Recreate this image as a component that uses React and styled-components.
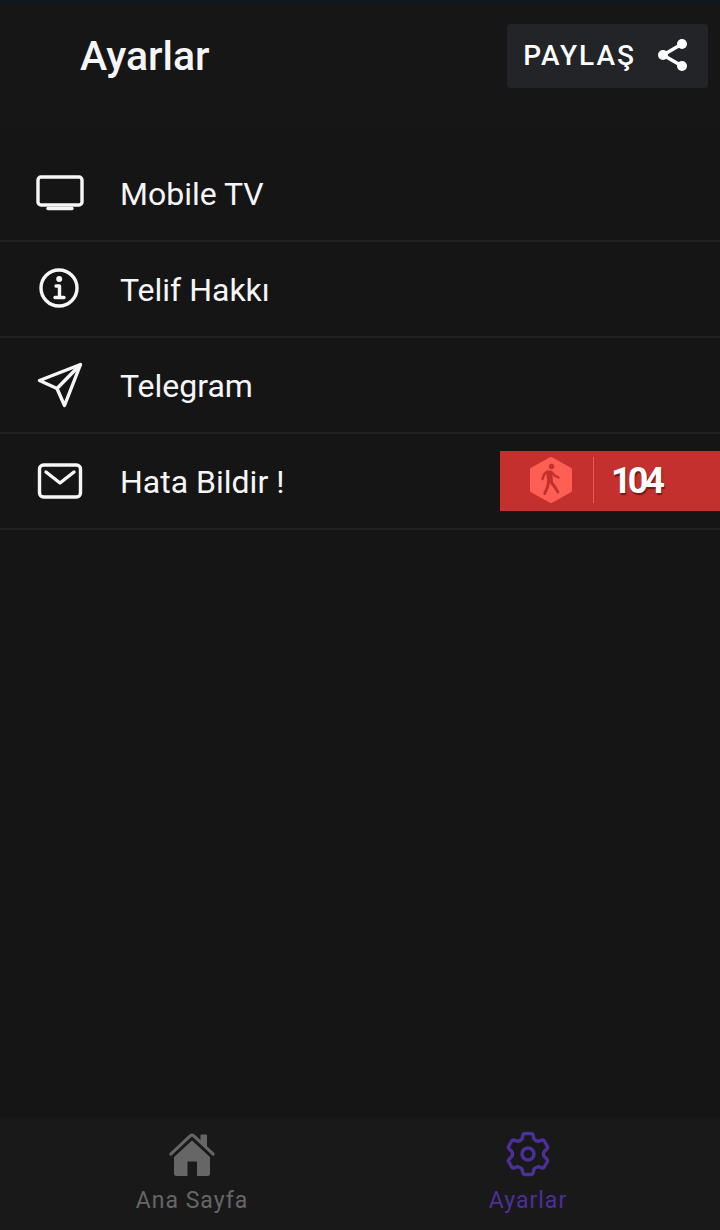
import styled, { createGlobalStyle } from "styled-components"

const GlobalStyle = createGlobalStyle`
    * {
        box-sizing: border-box;
    }

    body {
        margin: 0;
        background-color: #161616;
        font-family: Roboto, "Noto Sans", sans-serif;
    }
`

const Page = styled.div`
    display: flex;
    flex-direction: column;
    min-height: 100vh;
    color: #f6f6f8;
    background-color: #161616;
`

const Header = styled.header`
    display: flex;
    justify-content: space-between;
    align-items: center;
    padding: 20px 12px 42px 80px;
    border-top: 4px solid #10171d;
`

const Title = styled.h1`
    margin: 0;
    font-size: 41px;
    font-weight: 500;
    line-height: 62px;
`

const ShareButton = styled.button`
    display: flex;
    align-items: center;
    gap: 21px;
    height: 64px;
    padding: 0 19px 2px 16px;
    border: none;
    border-radius: 4px;
    color: #ffffff;
    background-color: #222427;
    font-family: inherit;
    font-size: 28px;
    font-weight: 500;
    letter-spacing: 2px;
    cursor: pointer;
`

const Main = styled.main`
    flex: 1;
    background-color: #151515;
`

const List = styled.ul`
    margin: 0;
    padding: 16px 0 0;
    list-style: none;
`

const ItemLink = styled.a`
    display: flex;
    align-items: center;
    gap: 36px;
    height: 96px;
    padding: 2px 36px 0;
    border-bottom: 2px solid #212121;
    color: inherit;
    font-size: 32px;
    line-height: 40px;
    text-decoration: none;
`

const LineIcon = styled.svg`
    flex: none;
    fill: none;
    stroke: currentColor;
    stroke-width: 3.4;
    stroke-linecap: round;
    stroke-linejoin: round;
`

const Toast = styled.aside`
    position: absolute;
    top: 451px;
    right: 0;
    display: flex;
    align-items: center;
    width: 220px;
    height: 60px;
    padding: 0 0 2px 30px;
    background-color: #c4302d;
`

const ToastValue = styled.div`
    height: 46px;
    margin-left: 21px;
    padding-left: 17px;
    border-left: 1px solid #f0584f;
    color: #ffffff;
    font-size: 36px;
    font-weight: 700;
    line-height: 48px;
    letter-spacing: -4px;
    text-shadow: 1px 2px 1px #701818;
`

const TabBar = styled.nav`
    display: flex;
    height: 113px;
    padding: 0 24px;
    background-color: #191919;
`

const Tab = styled.a`
    display: flex;
    flex: 1;
    flex-direction: column;
    align-items: center;
    gap: 8px;
    padding-top: 13px;
    color: ${({ $active }) => ($active ? "#4d2f99" : "#666666")};
    font-size: 23px;
    line-height: 30px;
    letter-spacing: 1px;
    text-decoration: none;
`

const TvIcon = () => (
    <LineIcon width="48" height="48" viewBox="0 0 48 48">
        <rect x="2" y="7" width="44" height="28" rx="3" />
        <path d="M12 38.500h24" />
    </LineIcon>
)

const InfoIcon = () => (
    <LineIcon width="48" height="48" viewBox="0 0 48 48">
        <circle cx="23" cy="22" r="18" />
        <path d="M20 20h3.500v11M19 31.500h9" />
        <circle cx="23.200" cy="13" r="2" fill="currentColor" strokeWidth="2" />
    </LineIcon>
)

const PlaneIcon = () => (
    <LineIcon width="48" height="48" viewBox="0 0 48 48">
        <path d="M44.500 2.500L3.500 18.500L21 26.500L28.500 43.500z" />
        <path d="M44 3L21 26.500" />
    </LineIcon>
)

const MailIcon = () => (
    <LineIcon width="48" height="48" viewBox="0 0 48 48">
        <rect x="3.500" y="7" width="41" height="32" rx="4" />
        <path d="M10 14l14 11 14-11" />
    </LineIcon>
)

const ShareIcon = () => (
    <LineIcon width="32" height="34" viewBox="0 0 32 34">
        <path d="M25 6L6 17L25 28" />
        <g fill="currentColor" stroke="none">
            <circle cx="25" cy="6" r="5" />
            <circle cx="6" cy="17" r="5" />
            <circle cx="25" cy="28" r="5" />
        </g>
    </LineIcon>
)

const HomeIcon = () => (
    <LineIcon width="48" height="48" viewBox="0 0 48 48">
        <path
            d="M24 10.500L42 27V43.500Q42 46 39.500 46H29V31.500H19.500V46H8.500Q6 46 6 43.500V27z"
            fill="currentColor"
            stroke="none"
        />
        <path d="M32.500 5.500Q32.500 4.500 33.500 4.500H38Q39 4.500 39 5.500V18.500L32.500 12.500z" fill="currentColor" stroke="none" />
        <path d="M2.800 24.200L22.500 5.700Q24 4.500 25.500 5.700L45.200 24.200" strokeWidth="3" />
    </LineIcon>
)

const GearIcon = () => (
    <LineIcon width="48" height="48" viewBox="-24 -24 48 48">
        <path d="M-6-15L-5-19Q-4.600-20.500-3-20.500H3Q4.600-20.500 5-19L6-15Q8-13 10-12.700L14-13.900Q15.500-14.300 16.300-13L19.300-7.700Q20-6.400 19-5.300L16-2.300Q15 0 16 2.300L19 5.300Q20 6.400 19.300 7.700L16.300 13Q15.500 14.300 14 13.900L10 12.700Q8 13 6 15L5 19Q4.600 20.500 3 20.500H-3Q-4.600 20.500-5 19L-6 15Q-8 13-10 12.700L-14 13.900Q-15.500 14.300-16.300 13L-19.300 7.700Q-20 6.400-19 5.300L-16 2.300Q-15 0-16-2.300L-19-5.300Q-20-6.400-19.300-7.700L-16.300-13Q-15.500-14.300-14-13.900L-10-12.700Q-8-13-6-15z" />
        <circle r="6" />
    </LineIcon>
)

const WalkerIcon = () => (
    <svg width="42" height="46" viewBox="0 0 42 46">
        <path
            d="M21 2L40 12.500V33.500L21 44L2 33.500V12.500z"
            fill="#ff5e54"
            stroke="#ff5e54"
            strokeWidth="4"
            strokeLinejoin="round"
        />
        <g fill="none" stroke="#c4302d" strokeLinecap="round" strokeLinejoin="round">
            <circle cx="21.500" cy="9.500" r="2.700" fill="#c4302d" stroke="none" />
            <path d="M17 14.500H21L22 24L18.500 25z" fill="#c4302d" strokeWidth="2" />
            <path d="M16.500 15L14 17.500L12.500 22M22 15.500L24.500 18.500L28.500 20.500" strokeWidth="2.400" />
            <path d="M18.500 24.500L17.500 30L14.800 36.500M20.500 24.500L24.500 29.500L27.800 35" strokeWidth="3" />
        </g>
    </svg>
)

const ITEMS = [
    { label: "Mobile TV", Icon: TvIcon },
    { label: "Telif Hakkı", Icon: InfoIcon },
    { label: "Telegram", Icon: PlaneIcon },
    { label: "Hata Bildir !", Icon: MailIcon },
]

const App = () => (
    <Page>
        <GlobalStyle />
        <Header>
            <Title>Ayarlar</Title>
            <ShareButton>
                PAYLAŞ
                <ShareIcon />
            </ShareButton>
        </Header>
        <Main>
            <List>
                {ITEMS.map(({ label, Icon }) => (
                    <li key={label}>
                        <ItemLink href="#">
                            <Icon />
                            {label}
                        </ItemLink>
                    </li>
                ))}
            </List>
        </Main>
        <Toast>
            <WalkerIcon />
            <ToastValue>104</ToastValue>
        </Toast>
        <TabBar>
            <Tab href="#">
                <HomeIcon />
                Ana Sayfa
            </Tab>
            <Tab href="#" $active>
                <GearIcon />
                Ayarlar
            </Tab>
        </TabBar>
    </Page>
)

export default App
